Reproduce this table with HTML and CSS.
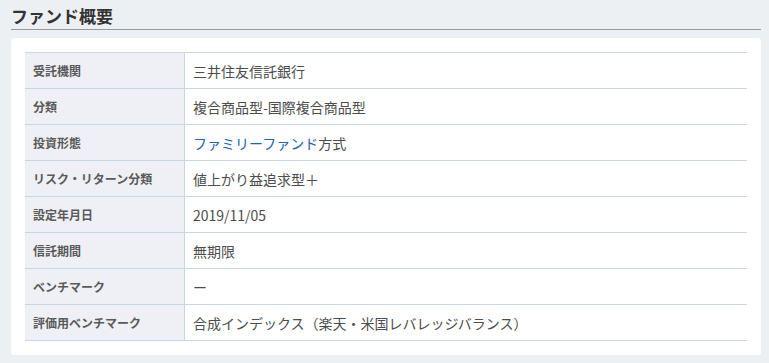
FILE: index.html
```html
<!DOCTYPE html>
<html lang="ja">
<head>
    <meta charset="UTF-8">
    <title>ファンド概要</title>
    <meta name="viewport" content="width=device-width, initial-scale=1.0">
    <link rel="stylesheet" href="styles.css">
</head>
<body>
    <div class="section">
        <h2 class="section-title">ファンド概要</h2>
        <div class="card">
            <table class="info-table">
                <tr><th>受託機関</th><td>三井住友信託銀行</td></tr>
                <tr><th>分類</th><td>複合商品型-国際複合商品型</td></tr>
                <tr><th>投資形態</th><td><a href="#">ファミリーファンド</a>方式</td></tr>
                <tr><th>リスク・リターン分類</th><td>値上がり益追求型＋</td></tr>
                <tr><th>設定年月日</th><td>2019/11/05</td></tr>
                <tr><th>信託期間</th><td>無期限</td></tr>
                <tr><th>ベンチマーク</th><td>ー</td></tr>
                <tr><th>評価用ベンチマーク</th><td>合成インデックス（楽天・米国レバレッジバランス）</td></tr>
            </table>
        </div>
    </div>
</body>
</html>
```

FILE: styles.css
```css
body {
    margin: 0;
    background: #edf0f3;
    font-family: "Noto Sans CJK JP", "Noto Sans", sans-serif;
    color: #4d4d4d;
}
.section { padding: 0 8px 0 11px; }
.section-title {
    margin: 0;
    padding-top: 4px;
    font-size: 17px;
    line-height: 24px;
    font-weight: bold;
    color: #333;
    border-bottom: 1px solid #999;
    padding-bottom: 1px;
}
.card {
    margin-top: 8px;
    background: #fff;
    border-radius: 3px;
    padding: 14px;
}
.info-table {
    width: 100%;
    border-collapse: collapse;
    border-top: 1px solid #c9d5e1;
}
.info-table tr { border-bottom: 1px solid #c9d5e1; }
.info-table th, .info-table td {
    height: 35px;
    padding: 0 8px;
    text-align: left;
    vertical-align: middle;
}
.info-table th {
    width: 143px;
    background: #eef0f5;
    border-right: 1px solid #c9d5e1;
    font-size: 12px;
    font-weight: bold;
    color: #5a5a5a;
}
.info-table td {
    font-size: 14px;
    color: #4d4d4d;
}
.info-table a {
    color: #2060b8;
    text-decoration: none;
}
```
